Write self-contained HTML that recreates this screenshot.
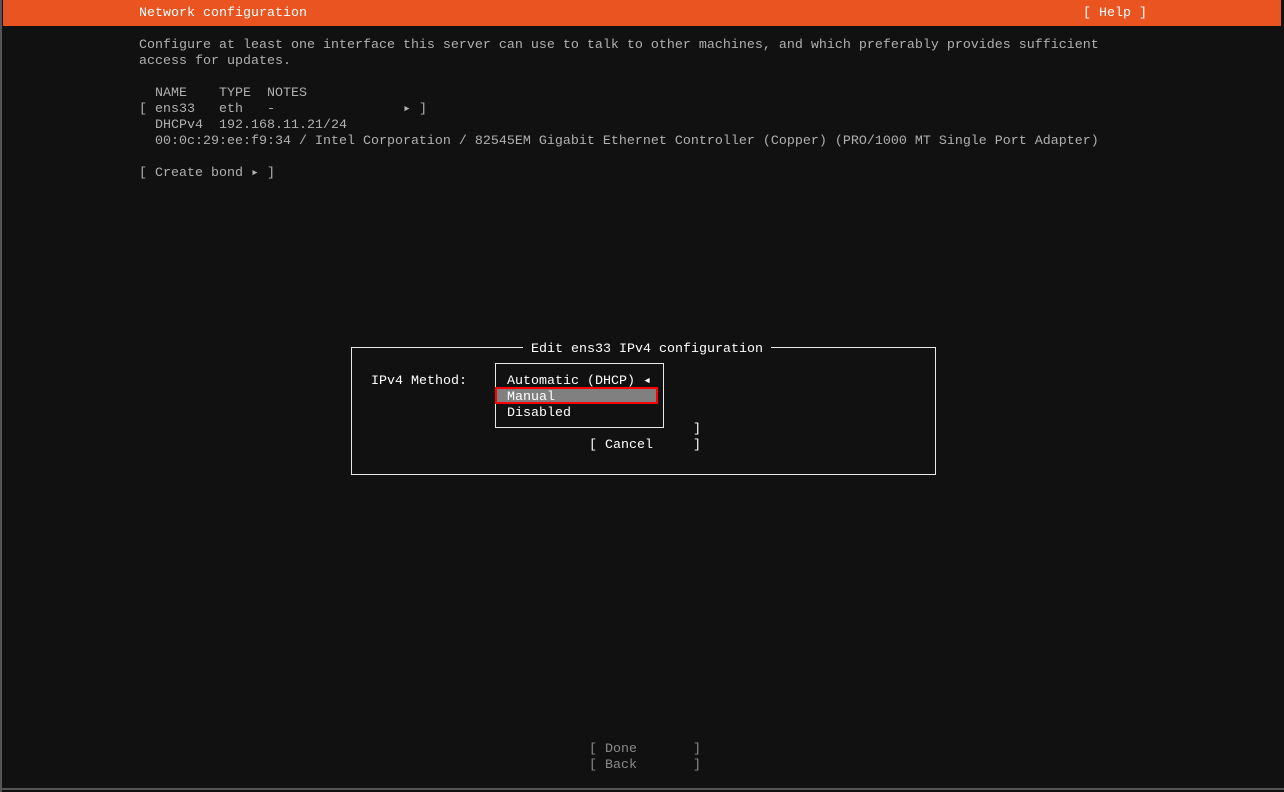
<!DOCTYPE html>
<html><head><style>
html,body{margin:0;padding:0;width:1284px;height:792px;background:#111;overflow:hidden}
body{position:relative;font-family:"Liberation Mono","DejaVu Sans Mono",monospace;font-size:13.33px;line-height:16px}
.t{position:absolute;white-space:pre;color:#b0b0b0}
.w{color:#fff}
.g{color:#8a8a8a}
.bx{position:absolute;border:1px solid #e8e8e8}
</style></head><body>
<div style="position:absolute;left:0;top:0;width:2px;height:792px;background:#555"></div>
<div style="position:absolute;left:0;top:788px;width:1284px;height:2px;background:#555"></div>
<div style="position:absolute;left:3px;top:0;width:1278px;height:26px;background:#e95420"></div>
<div class="t w" style="left:139px;top:6px">Network configuration</div>
<div class="t w" style="left:1083px;top:6px">[ Help ]</div>
<div class="t" style="left:139px;top:38px">Configure at least one interface this server can use to talk to other machines, and which preferably provides sufficient
access for updates.

  NAME    TYPE  NOTES
[ ens33   eth   -                ▸ ]
  DHCPv4  192.168.11.21/24
  00:0c:29:ee:f9:34 / Intel Corporation / 82545EM Gigabit Ethernet Controller (Copper) (PRO/1000 MT Single Port Adapter)

[ Create bond ▸ ]</div>

<div class="bx" style="left:351px;top:347px;width:583px;height:126px"></div>
<div class="t w" style="left:523px;top:342px;background:#111">&nbsp;Edit ens33 IPv4 configuration&nbsp;</div>
<div class="t w" style="left:371px;top:374px">IPv4 Method:</div>
<div class="bx" style="left:495px;top:363px;width:167px;height:63px"></div>
<div style="position:absolute;left:497px;top:388px;width:160px;height:15px;background:#808080"></div>
<div style="position:absolute;left:495px;top:387px;width:159px;height:13px;border:2px solid #f00"></div>
<div class="t w" style="left:507px;top:374px">Automatic (DHCP) ◂
Manual
Disabled</div>
<div class="t w" style="left:589px;top:422px">             ]
[ Cancel     ]</div>

<div class="t g" style="left:589px;top:742px">[ Done       ]
[ Back       ]</div>
</body></html>
